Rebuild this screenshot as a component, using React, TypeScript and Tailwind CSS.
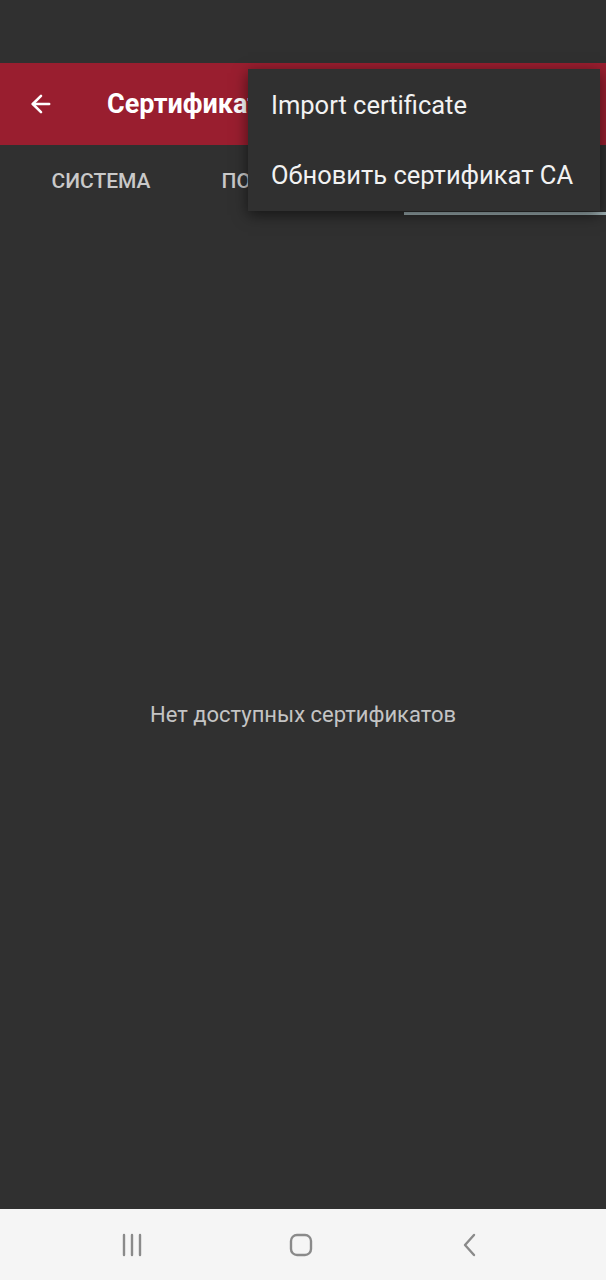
import { ArrowLeft } from 'lucide-react';

const tabs = ['СИСТЕМА', 'ПОЛЬЗОВАТЕЛЬ', 'ПРИЛОЖЕНИЕ'];

export default function App() {
  return (
    <div className="relative flex h-[1280px] w-[606px] flex-col overflow-hidden bg-[#303030] font-['Roboto',sans-serif]">
      {/* status bar */}
      <div className="h-[63px] shrink-0 bg-[#303030]" />

      {/* app bar */}
      <div className="flex h-[82px] shrink-0 items-center bg-[#991e2f] pl-[27px]">
        <ArrowLeft className="h-[28px] w-[28px] text-white" strokeWidth={2.2} />
        <span className="ml-[52px] text-[27px] font-bold text-white">Сертификаты</span>
      </div>

      {/* tabs */}
      <div className="flex h-[72px] shrink-0">
        {tabs.map((t, i) => (
          <div key={t} className="relative flex flex-1 items-center justify-center pt-[2px]">
            <span className="text-[21px] font-medium text-[#c9c9c9]">{t}</span>
            {i === 2 && <div className="absolute bottom-[2px] left-0 right-0 h-[3px] bg-[#9fb1b4]" />}
          </div>
        ))}
      </div>

      {/* empty state */}
      <div className="flex flex-1 items-center justify-center pt-[2px]">
        <span className="text-[22px] text-[#c4c4c4]">Нет доступных сертификатов</span>
      </div>

      {/* nav bar */}
      <div className="flex h-[71px] shrink-0 items-center justify-center gap-[141px] bg-[#f5f5f5] pr-[4px]">
        <svg width="28" height="28" viewBox="0 0 28 28">
          <g stroke="#8a8a8a" strokeWidth="2.4" strokeLinecap="round">
            <line x1="6" y1="4" x2="6" y2="24" />
            <line x1="14" y1="4" x2="14" y2="24" />
            <line x1="22" y1="4" x2="22" y2="24" />
          </g>
        </svg>
        <svg width="28" height="28" viewBox="0 0 28 28">
          <rect x="4" y="4" width="20" height="20" rx="6" fill="none" stroke="#8a8a8a" strokeWidth="2.4" />
        </svg>
        <svg width="28" height="28" viewBox="0 0 28 28">
          <polyline points="18,4 9,14 18,24" fill="none" stroke="#8a8a8a" strokeWidth="2.4" strokeLinecap="round" strokeLinejoin="round" />
        </svg>
      </div>

      {/* overflow menu */}
      <div className="absolute left-[248px] top-[69px] w-[352px] bg-[#303030] py-[1px] shadow-[0_4px_14px_rgba(0,0,0,0.55)]">
        <div className="flex h-[70px] items-center pl-[23px] text-[25.5px] text-[#f2f2f2]">Import certificate</div>
        <div className="flex h-[70px] items-center pl-[23px] text-[25.5px] text-[#f2f2f2]">Обновить сертификат CA</div>
      </div>
    </div>
  );
}
